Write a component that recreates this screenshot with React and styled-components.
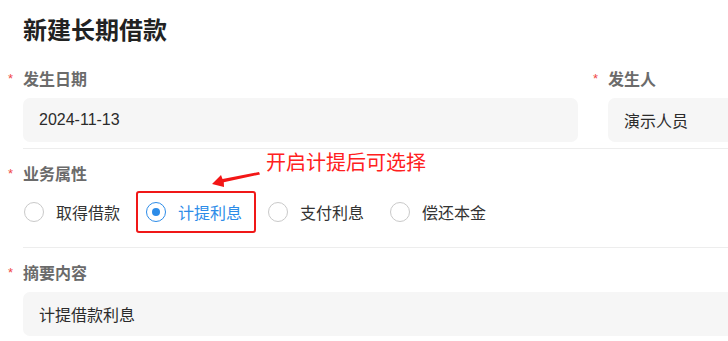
import React from "react";
import styled, {createGlobalStyle} from "styled-components";

const GlobalStyle = createGlobalStyle`
    html, body {
        margin: 0;
        padding: 0;
        background: #fff;
        overflow: hidden;
    }

    body {
        font-family: "Liberation Sans", "Noto Sans CJK SC", sans-serif;
        color: #333;
    }
`;

const Viewport = styled.div`
    width: 728px;
    overflow: hidden;
`;

const Page = styled.div`
    width: 1200px;
    padding: 15px 0 0 23px;
`;

const Title = styled.h1`
    margin: 0 0 7px;

    font-size: 24px;
    line-height: 32px;
    font-weight: 700;
    color: #222;
`;

const Section = styled.div`
    position: relative;

    display: flex;
    gap: 30px;

    padding: 13px 0 ${({bottom}) => bottom}px;

    border-bottom: ${({last}) => (last ? "none" : "1px solid #ededed")};
`;

const Field = styled.div`
    flex: ${({grow}) => grow || "0 0 555px"};
`;

const Label = styled.div`
    display: flex;
    align-items: center;

    height: 22px;

    font-size: 16px;
    font-weight: 600;
    color: #6b6b6b;
`;

const Star = styled.span`
    width: 15px;
    margin-left: -15px;

    font-size: 13px;
    font-weight: 400;
    color: #f04848;
`;

const Input = styled.div`
    display: flex;
    align-items: center;

    margin-top: 9px;
    height: 44px;
    padding: 0 16px;

    border-radius: 7px;
    background: #f6f6f6;

    font-size: 16px;
    color: #2b2b2b;
`;

const RadioGroup = styled.div`
    display: flex;
    gap: 2px;

    margin: 7px 0 0 -9px;
`;

const Option = styled.label`
    display: flex;
    align-items: center;
    gap: 12px;

    box-sizing: border-box;
    height: 42px;
    padding: 0 12px 0 8px;

    border: 2px solid ${({marked}) => (marked ? "#f01818" : "transparent")};
    border-radius: 3px;

    font-size: 16px;
    color: ${({checked}) => (checked ? "#2d8ce8" : "#333")};
`;

const Circle = styled.span`
    display: flex;
    align-items: center;
    justify-content: center;

    box-sizing: border-box;
    width: 20px;
    height: 20px;

    border: 1.5px solid ${({checked}) => (checked ? "#2d8ce8" : "#c9c9c9")};
    border-radius: 50%;

    &::after {
        content: "";
        display: ${({checked}) => (checked ? "block" : "none")};
        width: 8px;
        height: 8px;
        border-radius: 50%;
        background: #2d8ce8;
    }
`;

const Note = styled.div`
    position: absolute;
    top: 0;
    left: 243px;

    font-family: "Noto Sans CJK SC", sans-serif;
    font-size: 20px;
    line-height: 26px;
    color: #ff2020;
`;

const Arrow = styled.svg`
    position: absolute;
    top: 22px;
    left: 186px;
`;

const options = [
    {text: "取得借款"},
    {text: "计提利息", checked: true, marked: true},
    {text: "支付利息"},
    {text: "偿还本金"}
];

function Required({children}) {
    return (
        <Label>
            <Star>*</Star>
            {children}
        </Label>
    );
}

export default function App() {
    return (
        <Viewport>
            <GlobalStyle />
            <Page>
                <Title>新建长期借款</Title>

                <Section bottom={6}>
                    <Field>
                        <Required>发生日期</Required>
                        <Input>2024-11-13</Input>
                    </Field>
                    <Field grow="1">
                        <Required>发生人</Required>
                        <Input>演示人员</Input>
                    </Field>
                </Section>

                <Section bottom={14}>
                    <Field grow="1">
                        <Required>业务属性</Required>
                        <RadioGroup>
                            {options.map((opt) => (
                                <Option key={opt.text} checked={opt.checked} marked={opt.marked}>
                                    <Circle checked={opt.checked} />
                                    {opt.text}
                                </Option>
                            ))}
                        </RadioGroup>
                    </Field>
                    <Note>开启计提后可选择</Note>
                    <Arrow width="60" height="20" viewBox="0 0 60 20">
                        {/* tip at (3,13), tail at (51,2) */}
                        <path d="M3 13 L12 4 L13.5 8 L50 1 L51 3.5 L14.8 11.2 L15 16 Z" fill="#f31616" />
                    </Arrow>
                </Section>

                <Section bottom={6} last>
                    <Field grow="1">
                        <Required>摘要内容</Required>
                        <Input>计提借款利息</Input>
                    </Field>
                </Section>
            </Page>
        </Viewport>
    );
}
